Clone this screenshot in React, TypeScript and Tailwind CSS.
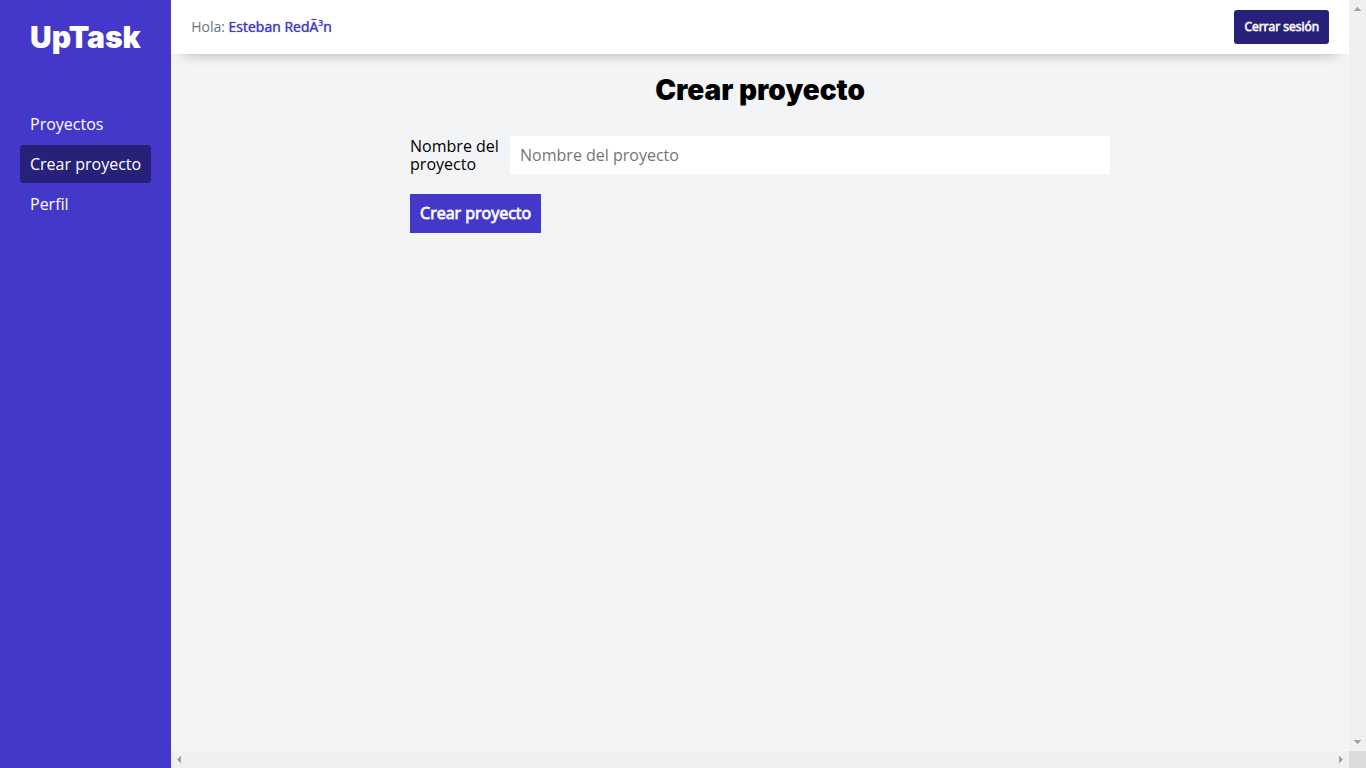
import React from "react";

const links = [
  { label: "Proyectos", active: false },
  { label: "Crear proyecto", active: true },
  { label: "Perfil", active: false },
];

function Arrow({ points }: { points: string }) {
  return (
    <svg viewBox="0 0 17 17" className="size-[17px] fill-[#a3a3a3]" shapeRendering="crispEdges" aria-hidden="true">
      <polygon points={points} />
    </svg>
  );
}

function Sidebar() {
  return (
    <aside className="shrink-0 bg-[#4338ca] px-5 pt-5 text-white">
      <h2 className="px-2.5 font-['Inter',sans-serif] text-[30px] leading-[34px] font-black">UpTask</h2>
      <nav className="mt-[51px] flex flex-col gap-0.5">
        {links.map((link) => (
          <a
            key={link.label}
            href="#"
            aria-current={link.active ? "page" : undefined}
            className={
              link.active
                ? "rounded-[3px] bg-[#28217a] p-2.5 leading-[18px]"
                : "rounded-[3px] p-2.5 leading-[18px]"
            }
          >
            {link.label}
          </a>
        ))}
      </nav>
    </aside>
  );
}

function TopBar() {
  return (
    <header className="flex items-center justify-between bg-white px-5 py-2.5 shadow-[0_10px_15px_-13px_rgba(0,0,0,0.45)]">
      <p className="text-sm text-[#6b7280]">
        Hola: <span className="text-[#4338ca] [text-shadow:0_0_1px_#4338ca]">Esteban RedÃ³n</span>
      </p>
      <a
        href="#"
        className="rounded-[3px] bg-[#28217a] p-2.5 text-xs leading-[14px] text-white [-webkit-text-stroke:1px_#ffffffb3]"
      >
        Cerrar sesión
      </a>
    </header>
  );
}

export default function App() {
  return (
    <div className="flex h-screen bg-[#f3f4f6] font-['Open_Sans',sans-serif] text-base text-black">
      <Sidebar />
      <div className="grid min-w-0 flex-1 grid-cols-[1fr_17px] grid-rows-[1fr_17px]">
        <main className="min-w-0 overflow-hidden">
          <TopBar />
          <div className="px-5 pt-5">
            <h1 className="text-center font-['Inter',sans-serif] text-[28px] leading-[32px] font-black">
              Crear proyecto
            </h1>
            <form className="mx-auto mt-[30px] max-w-[700px]" onSubmit={(e) => e.preventDefault()}>
              <div className="flex items-center">
                <label htmlFor="nombre" className="w-[100px] shrink-0 leading-[18px]">
                  Nombre del proyecto
                </label>
                <input
                  id="nombre"
                  type="text"
                  placeholder="Nombre del proyecto"
                  className="h-[38px] min-w-0 flex-1 bg-white px-2.5 outline-none placeholder:text-[#757575]"
                />
              </div>
              <button
                type="submit"
                className="mt-5 bg-[#4338ca] p-2.5 leading-[19px] text-white [-webkit-text-stroke:1px_#ffffffcc]"
              >
                Crear proyecto
              </button>
            </form>
          </div>
        </main>
        <div className="flex flex-col justify-between bg-[#f0f0f0]">
          <Arrow points="5,11 12,11 9,7 8,7" />
          <Arrow points="5,6 12,6 9,10 8,10" />
        </div>
        <div className="flex justify-between bg-[#f0f0f0]">
          <Arrow points="10,5 10,12 6,9 6,8" />
          <Arrow points="7,5 7,12 11,9 11,8" />
        </div>
        <div className="bg-[#dcdcdc]" />
      </div>
    </div>
  );
}
